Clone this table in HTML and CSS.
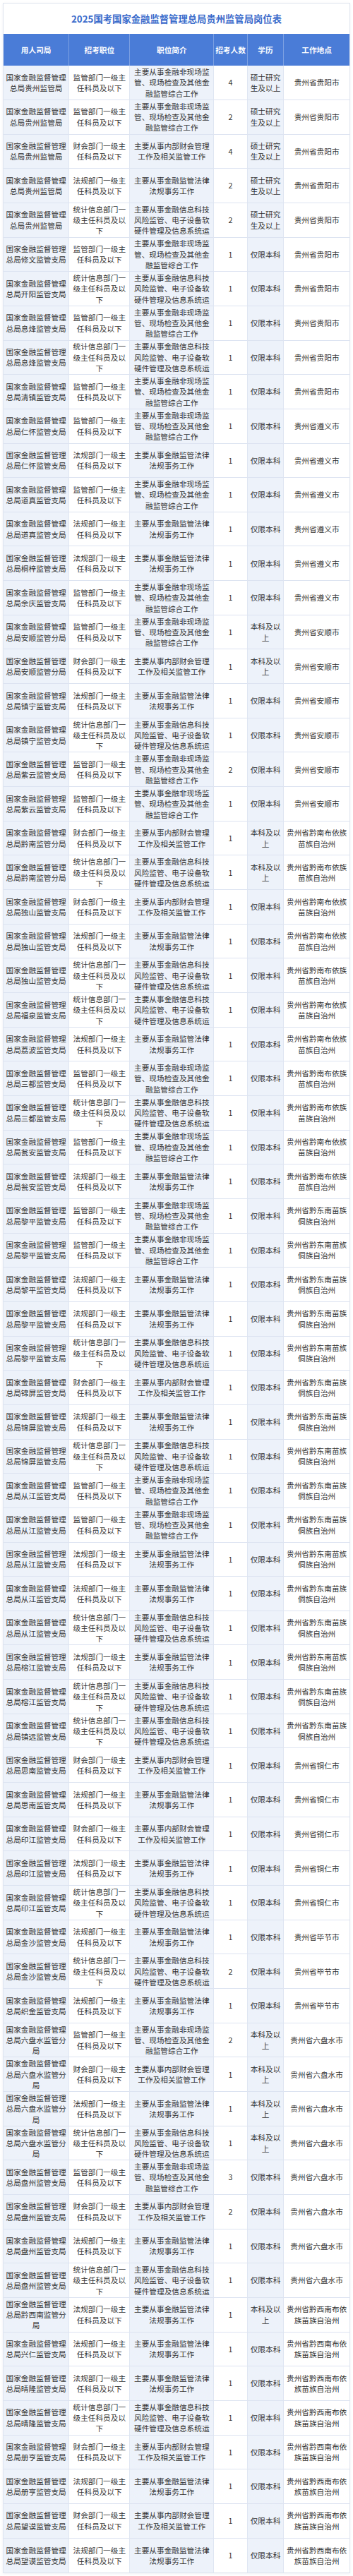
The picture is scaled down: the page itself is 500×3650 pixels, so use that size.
FILE: index.html
```html
<!DOCTYPE html>
<html lang="zh-CN">
<head>
<meta charset="utf-8">
<title>2025国考国家金融监督管理总局贵州监管局岗位表</title>
<link rel="stylesheet" href="styles.css">
</head>
<body>
<div class="card">
<h1 class="title">2025国考国家金融监督管理总局贵州监管局岗位表</h1>
<table class="jobs">
<thead><tr><th>用人司局</th><th>招考职位</th><th>职位简介</th><th>招考人数</th><th>学历</th><th>工作地点</th></tr></thead>
<tbody>
<tr><td>国家金融监督管理总局贵州监管局</td><td>监管部门一级主任科员及以下</td><td><div class="txt">主要从事金融非现场监管、现场检查及其他金融监管综合工作</div></td><td>4</td><td>硕士研究生及以上</td><td>贵州省贵阳市</td></tr>
<tr><td>国家金融监督管理总局贵州监管局</td><td>监管部门一级主任科员及以下</td><td><div class="txt">主要从事金融非现场监管、现场检查及其他金融监管综合工作</div></td><td>2</td><td>硕士研究生及以上</td><td>贵州省贵阳市</td></tr>
<tr><td>国家金融监督管理总局贵州监管局</td><td>财会部门一级主任科员及以下</td><td><div class="txt">主要从事内部财会管理工作及相关监管工作</div></td><td>4</td><td>硕士研究生及以上</td><td>贵州省贵阳市</td></tr>
<tr><td>国家金融监督管理总局贵州监管局</td><td>法规部门一级主任科员及以下</td><td><div class="txt">主要从事金融监管法律法规事务工作</div></td><td>2</td><td>硕士研究生及以上</td><td>贵州省贵阳市</td></tr>
<tr><td>国家金融监督管理总局贵州监管局</td><td>统计信息部门一级主任科员及以下</td><td><div class="txt">主要从事金融信息科技风险监管、电子设备软硬件管理及信息系统运</div></td><td>2</td><td>硕士研究生及以上</td><td>贵州省贵阳市</td></tr>
<tr><td>国家金融监督管理总局修文监管支局</td><td>监管部门一级主任科员及以下</td><td><div class="txt">主要从事金融非现场监管、现场检查及其他金融监管综合工作</div></td><td>1</td><td>仅限本科</td><td>贵州省贵阳市</td></tr>
<tr><td>国家金融监督管理总局开阳监管支局</td><td>统计信息部门一级主任科员及以下</td><td><div class="txt">主要从事金融信息科技风险监管、电子设备软硬件管理及信息系统运</div></td><td>1</td><td>仅限本科</td><td>贵州省贵阳市</td></tr>
<tr><td>国家金融监督管理总局息烽监管支局</td><td>监管部门一级主任科员及以下</td><td><div class="txt">主要从事金融非现场监管、现场检查及其他金融监管综合工作</div></td><td>1</td><td>仅限本科</td><td>贵州省贵阳市</td></tr>
<tr><td>国家金融监督管理总局息烽监管支局</td><td>统计信息部门一级主任科员及以下</td><td><div class="txt">主要从事金融信息科技风险监管、电子设备软硬件管理及信息系统运</div></td><td>1</td><td>仅限本科</td><td>贵州省贵阳市</td></tr>
<tr><td>国家金融监督管理总局清镇监管支局</td><td>监管部门一级主任科员及以下</td><td><div class="txt">主要从事金融非现场监管、现场检查及其他金融监管综合工作</div></td><td>1</td><td>仅限本科</td><td>贵州省贵阳市</td></tr>
<tr><td>国家金融监督管理总局仁怀监管支局</td><td>监管部门一级主任科员及以下</td><td><div class="txt">主要从事金融非现场监管、现场检查及其他金融监管综合工作</div></td><td>1</td><td>仅限本科</td><td>贵州省遵义市</td></tr>
<tr><td>国家金融监督管理总局仁怀监管支局</td><td>法规部门一级主任科员及以下</td><td><div class="txt">主要从事金融监管法律法规事务工作</div></td><td>1</td><td>仅限本科</td><td>贵州省遵义市</td></tr>
<tr><td>国家金融监督管理总局道真监管支局</td><td>监管部门一级主任科员及以下</td><td><div class="txt">主要从事金融非现场监管、现场检查及其他金融监管综合工作</div></td><td>1</td><td>仅限本科</td><td>贵州省遵义市</td></tr>
<tr><td>国家金融监督管理总局道真监管支局</td><td>法规部门一级主任科员及以下</td><td><div class="txt">主要从事金融监管法律法规事务工作</div></td><td>1</td><td>仅限本科</td><td>贵州省遵义市</td></tr>
<tr><td>国家金融监督管理总局桐梓监管支局</td><td>法规部门一级主任科员及以下</td><td><div class="txt">主要从事金融监管法律法规事务工作</div></td><td>1</td><td>仅限本科</td><td>贵州省遵义市</td></tr>
<tr><td>国家金融监督管理总局余庆监管支局</td><td>监管部门一级主任科员及以下</td><td><div class="txt">主要从事金融非现场监管、现场检查及其他金融监管综合工作</div></td><td>1</td><td>仅限本科</td><td>贵州省遵义市</td></tr>
<tr><td>国家金融监督管理总局安顺监管分局</td><td>监管部门一级主任科员及以下</td><td><div class="txt">主要从事金融非现场监管、现场检查及其他金融监管综合工作</div></td><td>1</td><td>本科及以上</td><td>贵州省安顺市</td></tr>
<tr><td>国家金融监督管理总局安顺监管分局</td><td>财会部门一级主任科员及以下</td><td><div class="txt">主要从事内部财会管理工作及相关监管工作</div></td><td>1</td><td>本科及以上</td><td>贵州省安顺市</td></tr>
<tr><td>国家金融监督管理总局镇宁监管支局</td><td>法规部门一级主任科员及以下</td><td><div class="txt">主要从事金融监管法律法规事务工作</div></td><td>1</td><td>仅限本科</td><td>贵州省安顺市</td></tr>
<tr><td>国家金融监督管理总局镇宁监管支局</td><td>统计信息部门一级主任科员及以下</td><td><div class="txt">主要从事金融信息科技风险监管、电子设备软硬件管理及信息系统运</div></td><td>1</td><td>仅限本科</td><td>贵州省安顺市</td></tr>
<tr><td>国家金融监督管理总局紫云监管支局</td><td>监管部门一级主任科员及以下</td><td><div class="txt">主要从事金融非现场监管、现场检查及其他金融监管综合工作</div></td><td>2</td><td>仅限本科</td><td>贵州省安顺市</td></tr>
<tr><td>国家金融监督管理总局紫云监管支局</td><td>监管部门一级主任科员及以下</td><td><div class="txt">主要从事金融非现场监管、现场检查及其他金融监管综合工作</div></td><td>1</td><td>仅限本科</td><td>贵州省安顺市</td></tr>
<tr><td>国家金融监督管理总局黔南监管分局</td><td>财会部门一级主任科员及以下</td><td><div class="txt">主要从事内部财会管理工作及相关监管工作</div></td><td>1</td><td>本科及以上</td><td>贵州省黔南布依族苗族自治州</td></tr>
<tr><td>国家金融监督管理总局黔南监管分局</td><td>统计信息部门一级主任科员及以下</td><td><div class="txt">主要从事金融信息科技风险监管、电子设备软硬件管理及信息系统运</div></td><td>1</td><td>本科及以上</td><td>贵州省黔南布依族苗族自治州</td></tr>
<tr><td>国家金融监督管理总局独山监管支局</td><td>财会部门一级主任科员及以下</td><td><div class="txt">主要从事内部财会管理工作及相关监管工作</div></td><td>1</td><td>仅限本科</td><td>贵州省黔南布依族苗族自治州</td></tr>
<tr><td>国家金融监督管理总局独山监管支局</td><td>法规部门一级主任科员及以下</td><td><div class="txt">主要从事金融监管法律法规事务工作</div></td><td>1</td><td>仅限本科</td><td>贵州省黔南布依族苗族自治州</td></tr>
<tr><td>国家金融监督管理总局独山监管支局</td><td>统计信息部门一级主任科员及以下</td><td><div class="txt">主要从事金融信息科技风险监管、电子设备软硬件管理及信息系统运</div></td><td>1</td><td>仅限本科</td><td>贵州省黔南布依族苗族自治州</td></tr>
<tr><td>国家金融监督管理总局福泉监管支局</td><td>统计信息部门一级主任科员及以下</td><td><div class="txt">主要从事金融信息科技风险监管、电子设备软硬件管理及信息系统运</div></td><td>1</td><td>仅限本科</td><td>贵州省黔南布依族苗族自治州</td></tr>
<tr><td>国家金融监督管理总局荔波监管支局</td><td>法规部门一级主任科员及以下</td><td><div class="txt">主要从事金融监管法律法规事务工作</div></td><td>1</td><td>仅限本科</td><td>贵州省黔南布依族苗族自治州</td></tr>
<tr><td>国家金融监督管理总局三都监管支局</td><td>监管部门一级主任科员及以下</td><td><div class="txt">主要从事金融非现场监管、现场检查及其他金融监管综合工作</div></td><td>1</td><td>仅限本科</td><td>贵州省黔南布依族苗族自治州</td></tr>
<tr><td>国家金融监督管理总局三都监管支局</td><td>统计信息部门一级主任科员及以下</td><td><div class="txt">主要从事金融信息科技风险监管、电子设备软硬件管理及信息系统运</div></td><td>1</td><td>仅限本科</td><td>贵州省黔南布依族苗族自治州</td></tr>
<tr><td>国家金融监督管理总局瓮安监管支局</td><td>监管部门一级主任科员及以下</td><td><div class="txt">主要从事金融非现场监管、现场检查及其他金融监管综合工作</div></td><td>1</td><td>仅限本科</td><td>贵州省黔南布依族苗族自治州</td></tr>
<tr><td>国家金融监督管理总局瓮安监管支局</td><td>法规部门一级主任科员及以下</td><td><div class="txt">主要从事金融监管法律法规事务工作</div></td><td>1</td><td>仅限本科</td><td>贵州省黔南布依族苗族自治州</td></tr>
<tr><td>国家金融监督管理总局黎平监管支局</td><td>监管部门一级主任科员及以下</td><td><div class="txt">主要从事金融非现场监管、现场检查及其他金融监管综合工作</div></td><td>1</td><td>仅限本科</td><td>贵州省黔东南苗族侗族自治州</td></tr>
<tr><td>国家金融监督管理总局黎平监管支局</td><td>监管部门一级主任科员及以下</td><td><div class="txt">主要从事金融非现场监管、现场检查及其他金融监管综合工作</div></td><td>1</td><td>仅限本科</td><td>贵州省黔东南苗族侗族自治州</td></tr>
<tr><td>国家金融监督管理总局黎平监管支局</td><td>法规部门一级主任科员及以下</td><td><div class="txt">主要从事金融监管法律法规事务工作</div></td><td>1</td><td>仅限本科</td><td>贵州省黔东南苗族侗族自治州</td></tr>
<tr><td>国家金融监督管理总局黎平监管支局</td><td>法规部门一级主任科员及以下</td><td><div class="txt">主要从事金融监管法律法规事务工作</div></td><td>1</td><td>仅限本科</td><td>贵州省黔东南苗族侗族自治州</td></tr>
<tr><td>国家金融监督管理总局黎平监管支局</td><td>统计信息部门一级主任科员及以下</td><td><div class="txt">主要从事金融信息科技风险监管、电子设备软硬件管理及信息系统运</div></td><td>1</td><td>仅限本科</td><td>贵州省黔东南苗族侗族自治州</td></tr>
<tr><td>国家金融监督管理总局锦屏监管支局</td><td>财会部门一级主任科员及以下</td><td><div class="txt">主要从事内部财会管理工作及相关监管工作</div></td><td>1</td><td>仅限本科</td><td>贵州省黔东南苗族侗族自治州</td></tr>
<tr><td>国家金融监督管理总局锦屏监管支局</td><td>法规部门一级主任科员及以下</td><td><div class="txt">主要从事金融监管法律法规事务工作</div></td><td>1</td><td>仅限本科</td><td>贵州省黔东南苗族侗族自治州</td></tr>
<tr><td>国家金融监督管理总局锦屏监管支局</td><td>统计信息部门一级主任科员及以下</td><td><div class="txt">主要从事金融信息科技风险监管、电子设备软硬件管理及信息系统运</div></td><td>1</td><td>仅限本科</td><td>贵州省黔东南苗族侗族自治州</td></tr>
<tr><td>国家金融监督管理总局从江监管支局</td><td>监管部门一级主任科员及以下</td><td><div class="txt">主要从事金融非现场监管、现场检查及其他金融监管综合工作</div></td><td>1</td><td>仅限本科</td><td>贵州省黔东南苗族侗族自治州</td></tr>
<tr><td>国家金融监督管理总局从江监管支局</td><td>监管部门一级主任科员及以下</td><td><div class="txt">主要从事金融非现场监管、现场检查及其他金融监管综合工作</div></td><td>1</td><td>仅限本科</td><td>贵州省黔东南苗族侗族自治州</td></tr>
<tr><td>国家金融监督管理总局从江监管支局</td><td>法规部门一级主任科员及以下</td><td><div class="txt">主要从事金融监管法律法规事务工作</div></td><td>1</td><td>仅限本科</td><td>贵州省黔东南苗族侗族自治州</td></tr>
<tr><td>国家金融监督管理总局从江监管支局</td><td>法规部门一级主任科员及以下</td><td><div class="txt">主要从事金融监管法律法规事务工作</div></td><td>1</td><td>仅限本科</td><td>贵州省黔东南苗族侗族自治州</td></tr>
<tr><td>国家金融监督管理总局从江监管支局</td><td>统计信息部门一级主任科员及以下</td><td><div class="txt">主要从事金融信息科技风险监管、电子设备软硬件管理及信息系统运</div></td><td>1</td><td>仅限本科</td><td>贵州省黔东南苗族侗族自治州</td></tr>
<tr><td>国家金融监督管理总局榕江监管支局</td><td>法规部门一级主任科员及以下</td><td><div class="txt">主要从事金融监管法律法规事务工作</div></td><td>1</td><td>仅限本科</td><td>贵州省黔东南苗族侗族自治州</td></tr>
<tr><td>国家金融监督管理总局榕江监管支局</td><td>统计信息部门一级主任科员及以下</td><td><div class="txt">主要从事金融信息科技风险监管、电子设备软硬件管理及信息系统运</div></td><td>1</td><td>仅限本科</td><td>贵州省黔东南苗族侗族自治州</td></tr>
<tr><td>国家金融监督管理总局镇远监管支局</td><td>统计信息部门一级主任科员及以下</td><td><div class="txt">主要从事金融信息科技风险监管、电子设备软硬件管理及信息系统运</div></td><td>1</td><td>仅限本科</td><td>贵州省黔东南苗族侗族自治州</td></tr>
<tr><td>国家金融监督管理总局思南监管支局</td><td>财会部门一级主任科员及以下</td><td><div class="txt">主要从事内部财会管理工作及相关监管工作</div></td><td>1</td><td>仅限本科</td><td>贵州省铜仁市</td></tr>
<tr><td>国家金融监督管理总局思南监管支局</td><td>法规部门一级主任科员及以下</td><td><div class="txt">主要从事金融监管法律法规事务工作</div></td><td>1</td><td>仅限本科</td><td>贵州省铜仁市</td></tr>
<tr><td>国家金融监督管理总局印江监管支局</td><td>财会部门一级主任科员及以下</td><td><div class="txt">主要从事内部财会管理工作及相关监管工作</div></td><td>1</td><td>仅限本科</td><td>贵州省铜仁市</td></tr>
<tr><td>国家金融监督管理总局印江监管支局</td><td>法规部门一级主任科员及以下</td><td><div class="txt">主要从事金融监管法律法规事务工作</div></td><td>1</td><td>仅限本科</td><td>贵州省铜仁市</td></tr>
<tr><td>国家金融监督管理总局印江监管支局</td><td>统计信息部门一级主任科员及以下</td><td><div class="txt">主要从事金融信息科技风险监管、电子设备软硬件管理及信息系统运</div></td><td>1</td><td>仅限本科</td><td>贵州省铜仁市</td></tr>
<tr><td>国家金融监督管理总局金沙监管支局</td><td>法规部门一级主任科员及以下</td><td><div class="txt">主要从事金融监管法律法规事务工作</div></td><td>1</td><td>仅限本科</td><td>贵州省毕节市</td></tr>
<tr><td>国家金融监督管理总局金沙监管支局</td><td>统计信息部门一级主任科员及以下</td><td><div class="txt">主要从事金融信息科技风险监管、电子设备软硬件管理及信息系统运</div></td><td>2</td><td>仅限本科</td><td>贵州省毕节市</td></tr>
<tr><td>国家金融监督管理总局织金监管支局</td><td>法规部门一级主任科员及以下</td><td><div class="txt">主要从事金融监管法律法规事务工作</div></td><td>1</td><td>仅限本科</td><td>贵州省毕节市</td></tr>
<tr><td>国家金融监督管理总局六盘水监管分局</td><td>监管部门一级主任科员及以下</td><td><div class="txt">主要从事金融非现场监管、现场检查及其他金融监管综合工作</div></td><td>2</td><td>本科及以上</td><td>贵州省六盘水市</td></tr>
<tr><td>国家金融监督管理总局六盘水监管分局</td><td>财会部门一级主任科员及以下</td><td><div class="txt">主要从事内部财会管理工作及相关监管工作</div></td><td>1</td><td>本科及以上</td><td>贵州省六盘水市</td></tr>
<tr><td>国家金融监督管理总局六盘水监管分局</td><td>法规部门一级主任科员及以下</td><td><div class="txt">主要从事金融监管法律法规事务工作</div></td><td>1</td><td>本科及以上</td><td>贵州省六盘水市</td></tr>
<tr><td>国家金融监督管理总局六盘水监管分局</td><td>统计信息部门一级主任科员及以下</td><td><div class="txt">主要从事金融信息科技风险监管、电子设备软硬件管理及信息系统运</div></td><td>1</td><td>本科及以上</td><td>贵州省六盘水市</td></tr>
<tr><td>国家金融监督管理总局盘州监管支局</td><td>监管部门一级主任科员及以下</td><td><div class="txt">主要从事金融非现场监管、现场检查及其他金融监管综合工作</div></td><td>3</td><td>仅限本科</td><td>贵州省六盘水市</td></tr>
<tr><td>国家金融监督管理总局盘州监管支局</td><td>财会部门一级主任科员及以下</td><td><div class="txt">主要从事内部财会管理工作及相关监管工作</div></td><td>2</td><td>仅限本科</td><td>贵州省六盘水市</td></tr>
<tr><td>国家金融监督管理总局盘州监管支局</td><td>法规部门一级主任科员及以下</td><td><div class="txt">主要从事金融监管法律法规事务工作</div></td><td>1</td><td>仅限本科</td><td>贵州省六盘水市</td></tr>
<tr><td>国家金融监督管理总局盘州监管支局</td><td>统计信息部门一级主任科员及以下</td><td><div class="txt">主要从事金融信息科技风险监管、电子设备软硬件管理及信息系统运</div></td><td>1</td><td>仅限本科</td><td>贵州省六盘水市</td></tr>
<tr><td>国家金融监督管理总局黔西南监管分局</td><td>法规部门一级主任科员及以下</td><td><div class="txt">主要从事金融监管法律法规事务工作</div></td><td>1</td><td>本科及以上</td><td>贵州省黔西南布依族苗族自治州</td></tr>
<tr><td>国家金融监督管理总局兴仁监管支局</td><td>法规部门一级主任科员及以下</td><td><div class="txt">主要从事金融监管法律法规事务工作</div></td><td>1</td><td>仅限本科</td><td>贵州省黔西南布依族苗族自治州</td></tr>
<tr><td>国家金融监督管理总局晴隆监管支局</td><td>法规部门一级主任科员及以下</td><td><div class="txt">主要从事金融监管法律法规事务工作</div></td><td>1</td><td>仅限本科</td><td>贵州省黔西南布依族苗族自治州</td></tr>
<tr><td>国家金融监督管理总局晴隆监管支局</td><td>统计信息部门一级主任科员及以下</td><td><div class="txt">主要从事金融信息科技风险监管、电子设备软硬件管理及信息系统运</div></td><td>1</td><td>仅限本科</td><td>贵州省黔西南布依族苗族自治州</td></tr>
<tr><td>国家金融监督管理总局册亨监管支局</td><td>财会部门一级主任科员及以下</td><td><div class="txt">主要从事内部财会管理工作及相关监管工作</div></td><td>1</td><td>仅限本科</td><td>贵州省黔西南布依族苗族自治州</td></tr>
<tr><td>国家金融监督管理总局册亨监管支局</td><td>法规部门一级主任科员及以下</td><td><div class="txt">主要从事金融监管法律法规事务工作</div></td><td>1</td><td>仅限本科</td><td>贵州省黔西南布依族苗族自治州</td></tr>
<tr><td>国家金融监督管理总局望谟监管支局</td><td>财会部门一级主任科员及以下</td><td><div class="txt">主要从事内部财会管理工作及相关监管工作</div></td><td>1</td><td>仅限本科</td><td>贵州省黔西南布依族苗族自治州</td></tr>
<tr><td>国家金融监督管理总局望谟监管支局</td><td>法规部门一级主任科员及以下</td><td><div class="txt">主要从事金融监管法律法规事务工作</div></td><td>1</td><td>仅限本科</td><td>贵州省黔西南布依族苗族自治州</td></tr>
</tbody>
</table>
</div>
</body>
</html>
```

FILE: styles.css
```css
* { box-sizing: border-box; }

html, body { background: #ffffff; }

body {
  margin: 0;
  padding: 4px;
  font-family: "Noto Sans CJK SC", "Noto Sans", sans-serif;
  color: #333333;
}

.card {
  width: 492px;
  background: #ffffff;
  border: 1px solid #dfe5ef;
  box-shadow: 0 1px 3px rgba(40, 70, 120, 0.08);
}

.title {
  margin: 0;
  height: 43.3px;
  display: flex;
  align-items: center;
  justify-content: center;
  font-size: 13.33px;
  font-weight: 700;
  color: #3a6bcb;
}

.jobs {
  display: block;
  width: 490px;
  border-collapse: separate;
  border-spacing: 0;
  font-size: 10.67px;
  line-height: 15.33px;
}

.jobs thead,
.jobs tbody {
  display: block;
}

.jobs tr {
  display: grid;
  grid-template-columns: 93.3px 86px 119px 47.4px 51.6px 92.7px;
  height: 48.66px;
}

.jobs thead tr {
  height: 45px;
  background: #4a7cd7;
}

.jobs th,
.jobs td {
  display: flex;
  align-items: center;
  justify-content: center;
  text-align: center;
  min-width: 0;
}

.jobs th {
  color: #ffffff;
  font-weight: 700;
  padding: 0 1px;
  white-space: nowrap;
  border-right: 1px solid rgba(255, 255, 255, 0.28);
}

.jobs td {
  padding: 0 3px;
  border-right: 1px solid #dfe6f2;
  border-bottom: 1px solid #dce3f1;
  background: #ffffff;
}

.jobs th:last-child,
.jobs td:last-child {
  border-right: 0;
}

.jobs td:nth-child(odd) {
  background: #edf2fa;
}

.jobs tbody tr:last-child td {
  border-bottom: 0;
}

.txt {
  max-height: 46px;
}
```
